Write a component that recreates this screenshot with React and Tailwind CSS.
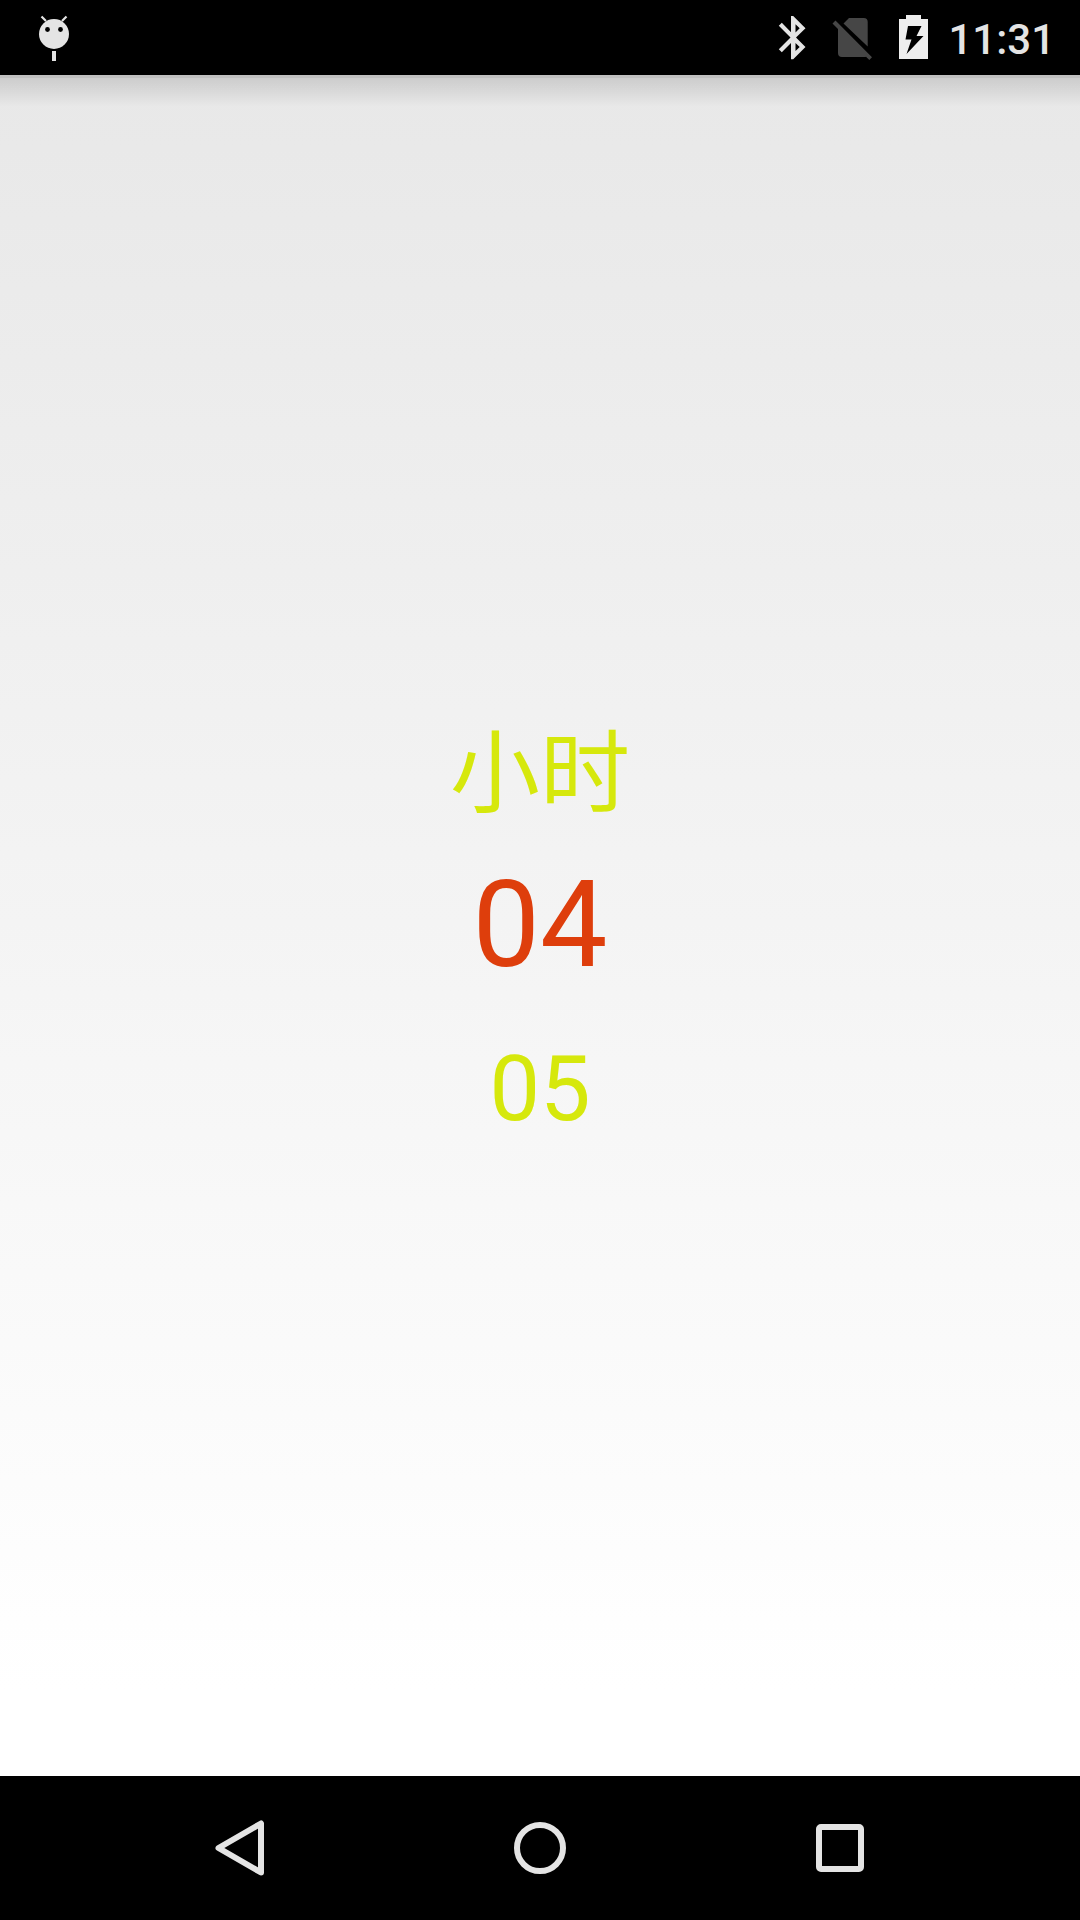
const BAR_ICON = 'block shrink-0';

function DebugIcon() {
  return (
    <svg className={BAR_ICON} width="36" height="47" viewBox="36 14 36 47" aria-hidden="true">
      <circle cx="54" cy="34" r="15" fill="#e4e4e4" />
      <path d="M41.5 16.5L46 21M66.500 16.500L62 21" stroke="#e4e4e4" strokeWidth="2.200" />
      <circle cx="47.500" cy="29.500" r="2.400" fill="#000" />
      <circle cx="60.500" cy="29.500" r="2.400" fill="#000" />
      <path d="M52 51h4v10h-4z" fill="#e4e4e4" />
    </svg>
  );
}

function BluetoothIcon() {
  return (
    <svg className={BAR_ICON} width="28" height="45" viewBox="778 15 28 45" aria-hidden="true">
      <path
        fill="#e4e4e4"
        fillRule="evenodd"
        d="M805.500 28.300L793.200 16H791v16.300L781.800 22.800L778.800 25.800L790.500 37.600L778.800 49.300L781.800 52.300L791 43V59.300H793.200L805.500 47L796 37.600ZM795.500 24.200L799.700 28.300L795.500 32.400ZM799.700 47L795.500 51.100V42.900Z"
      />
    </svg>
  );
}

function NoSimIcon() {
  return (
    <svg className={BAR_ICON} width="40" height="45" viewBox="832 15 40 45" aria-hidden="true">
      <path
        fill="#464646"
        d="M867.700 46.500V22Q867.700 18 863.700 18H849L843.500 23.500ZM835.500 20.500L832.500 23.500L838 29V53Q838 57 842 57H864.500Q865.700 57 866 56.800L869.300 60L872 57.200Z"
      />
    </svg>
  );
}

function BatteryIcon() {
  return (
    <svg className={BAR_ICON} width="30" height="45" viewBox="898 15 30 45" aria-hidden="true">
      <path
        fill="#eee"
        fillRule="evenodd"
        d="M906 15h15v4h7v40h-29v-40h7zM908 26L905.500 39.500H911.500L906.500 54L923.500 36H916.500L921.500 26Z"
      />
    </svg>
  );
}

function StatusBar() {
  return (
    <header className="flex h-[75px] items-center bg-black pl-9 pr-[25px]">
      <DebugIcon />
      <div className="ml-auto flex items-center">
        <BluetoothIcon />
        <div className="ml-[26px]"><NoSimIcon /></div>
        <div className="ml-[26px]"><BatteryIcon /></div>
        <time className="ml-[15px] w-28 pt-1 text-right text-[42px] leading-[47px] font-medium text-[#e4e4e4]">11:31</time>
      </div>
    </header>
  );
}

function HourPicker() {
  return (
    <ul className="flex flex-col items-center text-[90px] leading-[150px] text-[#d6e80c]" aria-label="小时">
      <li>小时</li>
      <li className="text-[120px] text-[#de3e0c]" aria-current="true">04</li>
      <li className="leading-[180px]">05</li>
    </ul>
  );
}

function NavButton({ label, children }) {
  return (
    <button type="button" aria-label={label} className="flex items-center justify-center">
      <svg width="60" height="60" viewBox="0 0 60 60" fill="none" stroke="#e4e4e4" strokeWidth="6" strokeLinejoin="round" aria-hidden="true">
        {children}
      </svg>
    </button>
  );
}

export default function App() {
  return (
    <div className="flex min-h-screen flex-col font-['Roboto','Noto_Sans_CJK_SC',sans-serif]">
      <StatusBar />
      <main className="flex flex-1 flex-col bg-linear-to-b from-[#e8e8e8] to-white to-95%">
        <div className="h-8 border-t-3 border-[#c0c0c0] bg-linear-to-b from-black/12 to-transparent" />
        <div className="flex flex-1 flex-col justify-center pb-1">
          <HourPicker />
        </div>
      </main>
      <nav className="grid h-36 grid-cols-3 bg-black px-[90px]">
        <NavButton label="Back">
          <path d="M51 5.5V54.500L8.500 30Z" />
        </NavButton>
        <NavButton label="Home">
          <circle cx="30" cy="30" r="23" />
        </NavButton>
        <NavButton label="Recent apps">
          <rect x="9" y="9" width="42" height="42" rx="2" />
        </NavButton>
      </nav>
    </div>
  );
}
